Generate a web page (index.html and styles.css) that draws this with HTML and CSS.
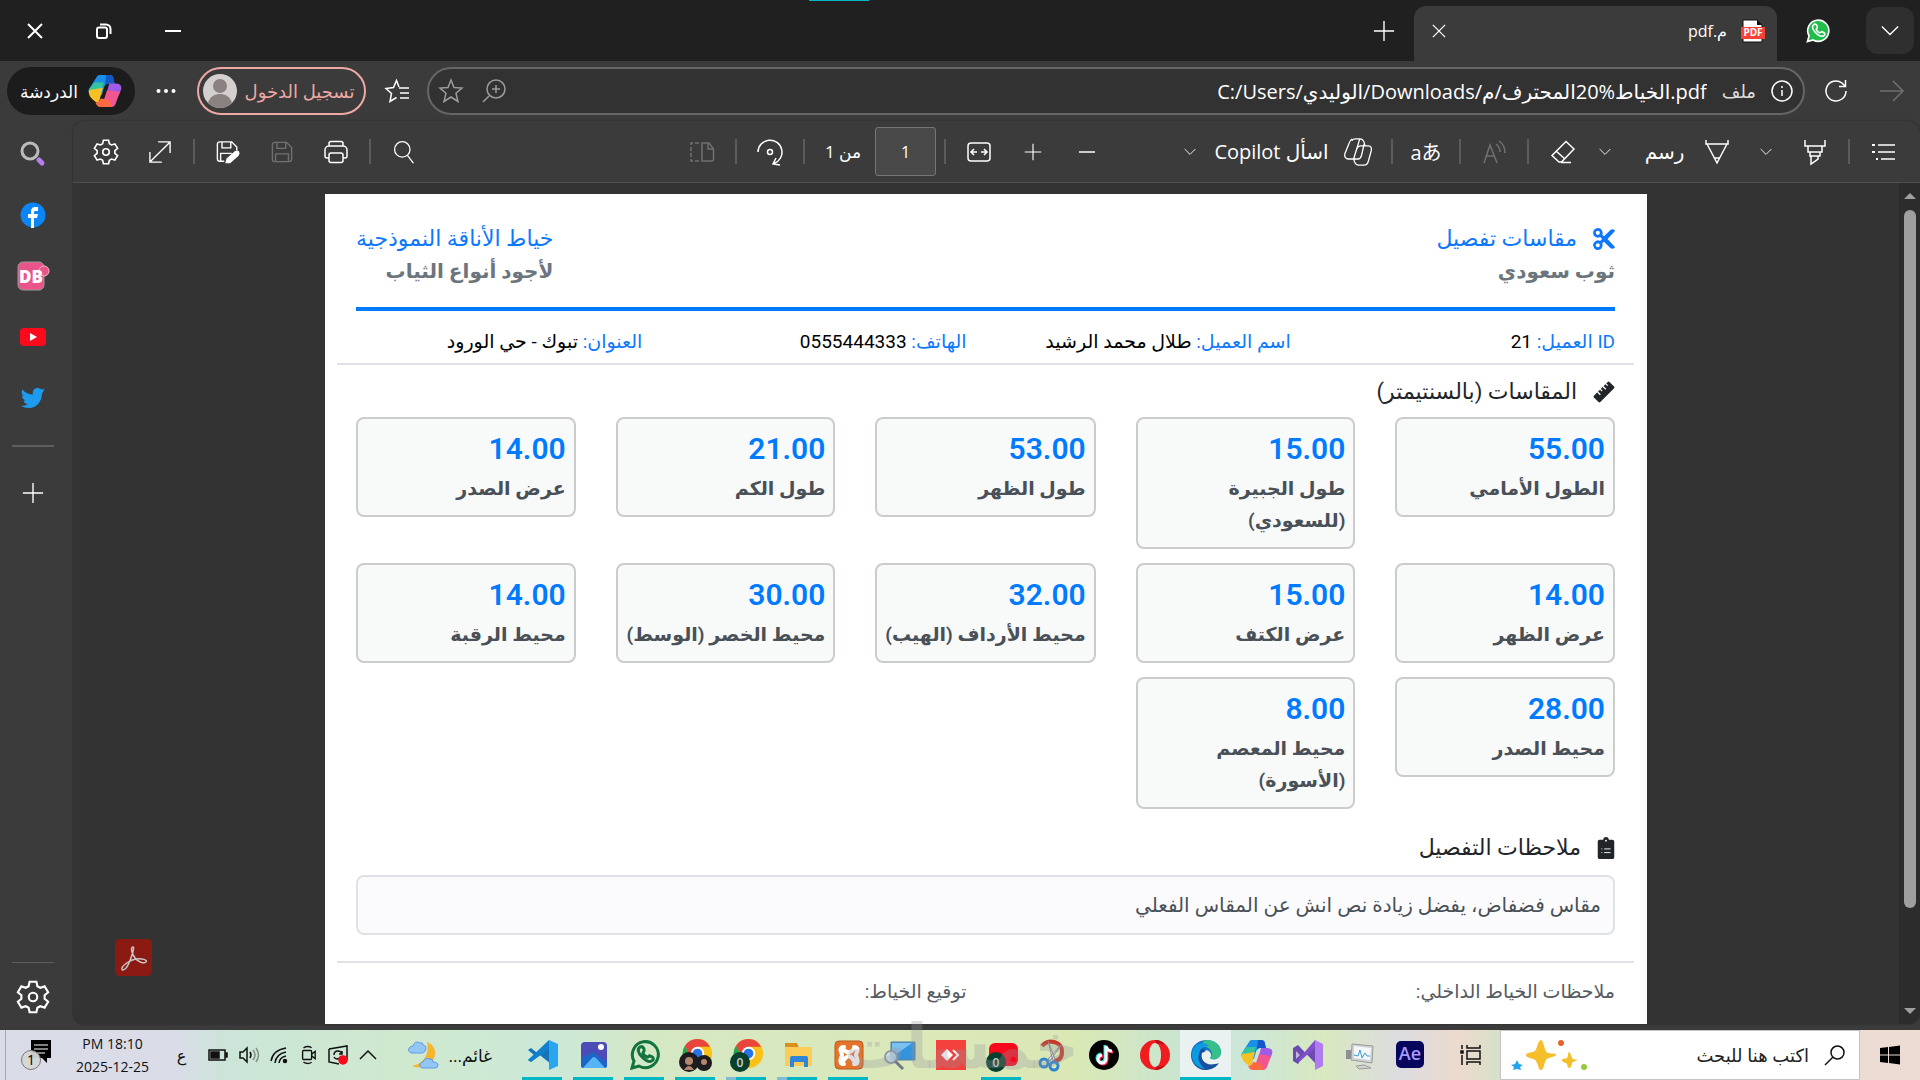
FILE: index.html
```html
<!DOCTYPE html>
<html lang="ar" dir="rtl">
<head>
    <meta charset="UTF-8">
    <meta name="viewport" content="width=device-width, initial-scale=1.0">
    <title>م.pdf</title>
    <link rel="stylesheet" href="styles.css">
</head>
<body>

<!-- shared icons -->
<svg class="sprite" aria-hidden="true">
    <symbol id="i-close" viewBox="0 0 16 16"><path d="M1 1l14 14M15 1L1 15"/></symbol>
    <symbol id="i-plus" viewBox="0 0 24 24"><path d="M12 1v22M1 12h22"/></symbol>
    <symbol id="i-down" viewBox="0 0 20 12"><path d="M1 1l9 9 9-9"/></symbol>
    <symbol id="i-search" viewBox="0 0 24 28"><circle cx="10" cy="11" r="9"/><path d="M16 18l7 9"/></symbol>
    <symbol id="i-gear" viewBox="0 0 24 24"><path d="M9.600 1.200h4.800l.7 3.200 2 1.100 3.100-1 2.500 4.200-2.500 2.100v2.400l2.500 2.100-2.500 4.200-3.100-1-2 1.100-.7 3.200H9.600l-.7-3.200-2-1.100-3.100 1-2.500-4.200 2.500-2.100v-2.400L1.300 8.700l2.500-4.200 3.100 1 2-1.100z"/><circle cx="12" cy="12" r="3"/></symbol>
    <symbol id="i-save" viewBox="0 0 24 24"><path d="M4 1.500h13l5.500 5.500v13a2.500 2.500 0 0 1-2.500 2.500H4A2.500 2.500 0 0 1 1.500 20V4A2.500 2.500 0 0 1 4 1.500zM6.500 1.500V8H16V1.500M5 22.500V14h14v8.500"/></symbol>
    <symbol id="i-copilot" viewBox="0 0 32 32">
        <path fill="#1a8fe8" d="M8 3c1-2 2-2 4-2h8c3 0 4 2 4 4l1 4h-5c-3 0-4 1-5 4l-2 7H6c-5 0-6-3-5-6z"/>
        <path fill="#32c5a0" d="M6 8h9l-4 12H6c-5 0-6-3-5-6z"/>
        <path fill="#f6c027" d="M1 15l13-2-3 11c-1 3-2 4-4 2C3 23 0 20 1 15z"/>
        <path fill="#1558c8" d="M17 1h3c3 0 4 2 4 4l1 4h-5c-2 0-3 0-4 2z"/>
        <path fill="#a05be6" d="M20 9h6c5 0 6 3 5 6l-2 5H17z"/>
        <path fill="#f0568f" d="M18 15l12 2-4 11c-1 2-2 3-4 3h-4l-4-4z"/>
        <path fill="#ff6a45" d="M7 27c2 0 4-1 5-4l7 1 4 6c-1 1-2 1-3 1h-8c-3 0-4-2-5-4z"/>
    </symbol>
    <symbol id="i-whatsapp" viewBox="0 0 32 32"><path d="M3 29l2-7A13 13 0 1 1 10 27z"/><path class="phone" d="M11 8c-3 2-2 6 2 10s8 6 11 3c1-2 0-3-3-4-1-1-2 2-3 1-2-1-4-3-4-4 0-2 2-1 1-4-1-2-2-3-4-2z"/></symbol>
    <symbol id="i-chrome" viewBox="0 0 32 32">
        <circle cx="16" cy="16" r="15" fill="#fbc116"/>
        <path fill="#e8453c" d="M3 8a15 15 0 0 1 26 1H16l-7 10z"/>
        <path fill="#2ba24c" d="M3 8l7 12 6 3-3 8A15 15 0 0 1 3 8z"/>
        <circle cx="16" cy="16" r="7" fill="#fff"/><circle cx="16" cy="16" r="5" fill="#2a74e8"/>
    </symbol>
</svg>

<div class="browser">
    <header class="titlebar">
        <button class="tab-menu" aria-label="قائمة علامات التبويب"><svg class="line w18"><use href="#i-down"/></svg></button>
        <button class="pinned-tab" aria-label="WhatsApp"><svg class="wa-tab"><use href="#i-whatsapp"/></svg></button>
        <div class="tab">
            <svg class="pdf-icon" viewBox="0 0 24 24"><path fill="#fff" stroke="#111" d="M2 1h14l5 5v17H2z"/><path fill="#111" d="M16 1l5 5h-5z"/><path fill="#f44336" d="M0 8h24v12H0z"/><text x="12" y="17" text-anchor="middle">PDF</text></svg>
            <span class="tab-title">م.pdf</span>
            <button aria-label="إغلاق علامة التبويب"><svg class="line w14"><use href="#i-close"/></svg></button>
        </div>
        <button class="new-tab" aria-label="علامة تبويب جديدة"><svg class="line w22"><use href="#i-plus"/></svg></button>
        <div class="window-buttons">
            <button aria-label="تصغير"><svg class="line thick w16" viewBox="0 0 16 16"><path d="M0 8h16"/></svg></button>
            <button aria-label="استعادة"><svg class="line thick w16" viewBox="0 0 16 16"><rect x="1" y="4.500" width="10" height="10.500" rx="2"/><path d="M4 1.500h6a4.500 4.500 0 0 1 4.500 4.500v5"/></svg></button>
            <button aria-label="إغلاق"><svg class="line thick w16"><use href="#i-close"/></svg></button>
        </div>
        <i class="top-mark"></i>
    </header>

    <div class="address-row">
        <button class="nav-btn dim" aria-label="الأمام"><svg class="line w24" viewBox="0 0 24 24"><path d="M0 12h23M13 2l10 10-10 10"/></svg></button>
        <button class="nav-btn" aria-label="تحديث"><svg class="line w24" viewBox="0 0 24 24"><path d="M22 12A10 10 0 1 1 18 4l3 3M21.500 1v6.500H15"/></svg></button>
        <div class="address">
            <svg class="line w22" viewBox="0 0 22 22"><circle cx="11" cy="11" r="10"/><path d="M11 10v6M11 6v2"/></svg>
            <label for="url">ملف</label>
            <input id="url" type="text" dir="ltr" value="C:/Users/الوليدي/Downloads/الخياط%20المحترف/م.pdf">
            <button class="soft" aria-label="تكبير"><svg class="line w24" viewBox="0 0 24 24"><circle cx="14" cy="10" r="9"/><path d="M7 17l-6 6M14 6v8M10 10h8"/></svg></button>
            <button class="soft" aria-label="إضافة إلى المفضلة"><svg class="line w24" viewBox="0 0 24 24"><path d="M12 1l3 7.500 8 .6-6 5.200 2 8.200-7-4.500-7 4.500 2-8.200-6-5.200 8-.6z"/></svg></button>
        </div>
        <button class="fav-btn" aria-label="المفضلة"><svg class="line w24" viewBox="0 0 24 24"><path d="M14 8L11.500 1.500 8.500 8.500 1 9.500l5.500 5-1.500 8 6.500-4M14 9h10M15 14h9M15 19h9"/></svg></button>
        <button class="signin">تسجيل الدخول
            <svg class="avatar" viewBox="0 0 34 34"><circle cx="17" cy="17" r="17" fill="#d3d0cf"/><circle cx="17" cy="12" r="7" fill="#8a8280"/><path fill="#8a8280" d="M5 29c2-7 7-9 12-9s10 2 12 9a17 17 0 0 1-24 0z"/></svg>
        </button>
        <button class="dots" aria-label="المزيد"><svg class="w20" viewBox="0 0 20 6"><circle cx="2.500" cy="3" r="2"/><circle cx="10" cy="3" r="2"/><circle cx="17.500" cy="3" r="2"/></svg></button>
        <button class="chat"><svg class="w34"><use href="#i-copilot"/></svg>الدردشة</button>
    </div>

    <div class="workspace">
        <main class="viewer">
            <div class="toolbar">
                <div class="group">
                    <button aria-label="جدول المحتويات"><svg class="line w24" viewBox="0 0 24 24"><path d="M7 5h17M7 12h17M10 19h14"/><path class="thick" d="M1 5h3M1 12h3M5 19h2"/></svg></button>
                    <i class="sep"></i>
                    <button aria-label="تمييز"><svg class="line w24" viewBox="0 0 24 24"><path d="M2 0v6h20V0M5 6v6h14V6M7 12v4h10v-4M8 16v8l7-5v-3"/></svg></button>
                    <button class="narrow" aria-label="خيارات التمييز"><svg class="line w12"><use href="#i-down"/></svg></button>
                    <button aria-label="قلم"><svg class="line w24" viewBox="0 0 24 24"><path d="M1 0v4h22V0M2 4l10 19L22 4M9.500 18h5"/></svg></button>
                    <button class="text draw">رسم</button>
                    <button class="narrow" aria-label="خيارات الرسم"><svg class="line w12"><use href="#i-down"/></svg></button>
                    <button class="eraser" aria-label="ممحاة"><svg class="line w24" viewBox="0 0 24 24"><path d="M15 1.500L23 9 10.500 22H8L1 15.500zM5 11l9 8M10 22.500h10"/></svg></button>
                    <i class="sep"></i>
                    <button class="dim" aria-label="القراءة بصوت عال"><svg class="line w24" viewBox="0 0 24 24"><path d="M2 23L8 5l7 18M4 16h9M14 4q4 3 4 8M17 1q6 4 6 12"/></svg></button>
                    <i class="sep"></i>
                    <button class="translate" aria-label="ترجمة">aあ</button>
                    <i class="sep"></i>
                    <button aria-label="Copilot"><svg class="line w28" viewBox="0 0 32 32"><path d="M9 3c1-2 2-2 4-2h5c3 0 4 1 5 4l1 4h4c3 0 4 3 3 6l-3 11c-1 4-3 5-5 5h-6c-3 0-4-1-5-4l-1-3H5c-3 0-5-3-4-6L5 8c1-3 2-5 4-7M24 9h-5c-3 0-4 2-5 5l-3 10h5c2 0 3-1 4-4l3-13M18 1l-7 23"/></svg></button>
                    <button class="text ask">اسأل Copilot</button>
                    <button class="narrow" aria-label="خيارات Copilot"><svg class="line w12"><use href="#i-down"/></svg></button>
                </div>
                <div class="group middle">
                    <button aria-label="تصغير العرض"><svg class="line w18" viewBox="0 0 18 18"><path d="M1 9h16"/></svg></button>
                    <button aria-label="تكبير العرض"><svg class="line w18" viewBox="0 0 24 24"><path d="M12 1v22M1 12h22"/></svg></button>
                    <button aria-label="ملاءمة العرض"><svg class="line w24" viewBox="0 0 24 24"><rect x="1" y="3" width="22" height="18" rx="3"/><path d="M10 12H4.500M7 9l-3 3 3 3M14 12h5.500M17 9l3 3-3 3"/></svg></button>
                    <i class="sep"></i>
                    <input class="page-input" type="text" value="1" aria-label="رقم الصفحة">
                    <span class="page-count">من 1</span>
                    <i class="sep"></i>
                    <button aria-label="تدوير"><svg class="line w28" viewBox="0 0 28 28"><path d="M2 14A12 12 0 1 1 18 25.500M24 27l-7-1 3-6"/><circle cx="14" cy="14" r="2.500"/></svg></button>
                    <i class="sep"></i>
                    <button class="dim" aria-label="عرض الصفحة"><svg class="line w24" viewBox="0 0 24 24"><path d="M12 3h7l4.500 6v10a2 2 0 0 1-2 2H12zM18 3v6h5"/><path stroke-dasharray="4 2" d="M9 3H1v18h8"/></svg></button>
                </div>
                <div class="group end">
                    <button aria-label="بحث"><svg class="line w24"><use href="#i-search"/></svg></button>
                    <i class="sep"></i>
                    <button aria-label="طباعة"><svg class="line w24" viewBox="0 0 24 24"><path d="M5 6V3.500A2 2 0 0 1 7 1.500h10a2 2 0 0 1 2 2V6M5 18H3a2 2 0 0 1-2-2v-6a4 4 0 0 1 4-4h14a4 4 0 0 1 4 4v6a2 2 0 0 1-2 2h-2"/><rect x="5" y="13" width="14" height="9.500" rx="2"/></svg></button>
                    <button class="dim" aria-label="حفظ"><svg class="line w22"><use href="#i-save"/></svg></button>
                    <button aria-label="حفظ باسم"><svg class="line w24" viewBox="0 0 26 25"><path d="M9 22.500H4A2.500 2.500 0 0 1 1.500 20V4A2.500 2.500 0 0 1 4 1.500h13L22.500 7v4M6.500 1.500V8H16V1.500M5 22.500V14h12"/><path fill="currentColor" d="M11 24l1-4 9-8c3-1 5 1 3 4l-9 8z"/></svg></button>
                    <i class="sep"></i>
                    <button aria-label="ملء الشاشة"><svg class="line w22" viewBox="0 0 24 24"><path d="M1 23L23 1M10 1h13v12M1 12v11h13"/></svg></button>
                    <button aria-label="إعدادات"><svg class="line w26"><use href="#i-gear"/></svg></button>
                </div>
            </div>

            <div class="canvas">
                <div class="scrollbar"><i class="arrow up"></i><i class="thumb"></i><i class="arrow down"></i></div>
                <div class="pages">
                    <article class="paper">
                        <header class="paper-head">
                            <div>
                                <h1><svg class="fa" viewBox="0 0 512 512"><path fill-rule="evenodd" d="M256 192l-40-35A112 112 0 1 0 165 211l46 45-46 45a112 112 0 1 0 51 54l40-35 135 136c33 33 77 31 113 4 8-6 8-16 1-23L339 256 505 75c7-7 7-17 1-23-36-27-80-29-113 4zM112 160a48 48 0 1 1 0-96 48 48 0 0 1 0 96zm0 288a48 48 0 1 1 0-96 48 48 0 0 1 0 96z"/></svg>مقاسات تفصيل</h1>
                                <p>ثوب سعودي</p>
                            </div>
                            <div>
                                <h1>خياط الأناقة النموذجية</h1>
                                <p>لأجود أنواع الثياب</p>
                            </div>
                        </header>

                        <div class="client">
                            <div><b>ID العميل:</b> 21</div>
                            <div><b>اسم العميل:</b> طلال محمد الرشيد</div>
                            <div><b>الهاتف:</b> 0555444333</div>
                            <div><b>العنوان:</b> تبوك - حي الورود</div>
                        </div>

                        <h2 class="sizes-title"><svg class="fa" viewBox="0 0 24 24"><path d="M1 16L16 1q1-1 2 0l5 5q1 1 0 2L8 23q-1 1-2 0l-5-5q-1-1 0-2z"/><path stroke="#fff" stroke-width="1.400" fill="none" d="M5 12l3 3M8 9l2 2M11 6l3 3M14 3l2 2"/></svg>المقاسات (بالسنتيمتر)</h2>
                        <div class="cards">
                            <div class="card"><strong>55.00</strong><span>الطول الأمامي</span></div>
                            <div class="card"><strong>15.00</strong><span>طول الجبيرة<br>(للسعودي)</span></div>
                            <div class="card"><strong>53.00</strong><span>طول الظهر</span></div>
                            <div class="card"><strong>21.00</strong><span>طول الكم</span></div>
                            <div class="card"><strong>14.00</strong><span>عرض الصدر</span></div>
                            <div class="card"><strong>14.00</strong><span>عرض الظهر</span></div>
                            <div class="card"><strong>15.00</strong><span>عرض الكتف</span></div>
                            <div class="card"><strong>32.00</strong><span>محيط الأرداف (الهيب)</span></div>
                            <div class="card"><strong>30.00</strong><span>محيط الخصر (الوسط)</span></div>
                            <div class="card"><strong>14.00</strong><span>محيط الرقبة</span></div>
                            <div class="card"><strong>28.00</strong><span>محيط الصدر</span></div>
                            <div class="card"><strong>8.00</strong><span>محيط المعصم<br>(الأسورة)</span></div>
                        </div>

                        <h2 class="notes-title"><svg class="fa slim" viewBox="0 0 18 24"><path d="M2 3h4q0-3 3-3t3 3h4q2 0 2 2v17q0 2-2 2H2q-2 0-2-2V5q0-2 2-2z"/><path stroke="#fff" fill="none" d="M4 13h1M7 13h7M4 17h1M7 17h7"/><circle cx="9" cy="4" r="1" fill="#fff"/></svg>ملاحظات التفصيل</h2>
                        <p class="notes">مقاس فضفاض، يفضل زيادة نص انش عن المقاس الفعلي</p>

                        <footer class="paper-foot">
                            <span>ملاحظات الخياط الداخلي:</span>
                            <span>توقيع الخياط:</span>
                        </footer>
                    </article>
                </div>
                <button class="acrobat" aria-label="Acrobat"><svg class="line w26" viewBox="0 0 26 26"><path d="M12 2c-3 0-1 7 2 11s9 6 11 4-4-4-10-3S2 20 1 23s3 3 6-3 7-18 5-18z"/></svg></button>
            </div>
        </main>

        <nav class="sidebar">
            <button aria-label="بحث"><svg class="w26" viewBox="0 0 26 26"><circle cx="10" cy="10" r="8" fill="none" stroke="#b9bbbc" stroke-width="3"/><path stroke="#b77fee" stroke-width="5" stroke-linecap="round" d="M19 19l3 3"/></svg></button>
            <button aria-label="Facebook"><svg class="w26" viewBox="0 0 26 26"><circle cx="13" cy="13" r="12.500" fill="#0b86f4"/><path fill="#fff" d="M11 26V16H8v-4h3v-2c0-4 2-5 4-5h3v4h-2c-1 0-2 0-2 2v1h4l-1 4h-3v10z"/></svg></button>
            <button aria-label="DB"><svg class="w32" viewBox="0 0 32 28"><rect x="1" width="26" height="28" rx="5" fill="#e9558b" stroke="#999"/><circle cx="27" cy="9" r="5" fill="#e9558b" stroke="#f6b7cc"/><text x="14" y="21" class="db" text-anchor="middle">DB</text></svg></button>
            <button aria-label="YouTube"><svg class="w26" viewBox="0 0 26 18"><rect width="26" height="18" rx="4" fill="#fb0a1c"/><path fill="#fff" d="M10 5l7 4-7 4z"/></svg></button>
            <button aria-label="Twitter"><svg class="w24" viewBox="0 0 24 20"><path fill="#1d9bf0" d="M23 2.500l-2 3C21 14 15 20 8 20c-3 0-6-1-8-2 3 0 5-1 7-2-2 0-4-1-4.500-3.500H5C2 12 1 9.500 1 7.500l2 .5C0 6 .500 3 1.500 1.500 4 5 8 6.500 12 6.500 11 2 14 0 17 0c1 0 3 1 3.500 1.500L23.500.5 22 3z"/></svg></button>
            <hr>
            <button aria-label="إضافة"><svg class="line w22"><use href="#i-plus"/></svg></button>
            <div class="sidebar-end">
                <hr>
                <button aria-label="إعدادات الشريط الجانبي"><svg class="line w34"><use href="#i-gear"/></svg></button>
            </div>
        </nav>
    </div>
</div>

<footer class="taskbar">
    <button class="start" aria-label="ابدأ"><svg class="w20" viewBox="0 0 20 20"><path d="M0 3l8-1v7.500H0zM9 2l11-1.500v9H9zM0 10.500h8V18l-8-1zM9 10.500h11v9L9 18z"/></svg></button>
    <div class="search">
        <svg class="line w20" viewBox="0 0 20 20"><circle cx="12.500" cy="7.500" r="6.500"/><path d="M8 12L0 20"/></svg>
        <input id="search" type="text" placeholder="اكتب هنا للبحث" aria-label="اكتب هنا للبحث">
        <svg class="sparkle" viewBox="0 0 76 30"><path fill="#f4bf2a" d="M30 0c3 0 3 12 7 13s9 0 8 2-8 2-10 5-2 10-5 10-3-8-6-10-9-2-9-5 7-2 9-4 3-11 6-11zM58 12c2 0 2 6 4 7s5 0 4 1-5 2-5 3-1 5-3 5-1-4-3-5-4-1-4-3 4-1 5-2 1-6 2-6z"/><path fill="#25a4ee" d="M6 20l2 4 4 1-3 2 1 3-4-1-4 1 1-3-3-2 4-1z"/><circle cx="50" cy="3" r="3" fill="#e8622c"/><circle cx="73" cy="27" r="3" fill="#9ac83c"/></svg>
    </div>
    <button class="task-view" aria-label="عرض المهام"><svg class="line w20" viewBox="0 0 20 20"><path d="M7 0v3h13V0M7 20v-3h13v3M7 6h13v8H7zM2 0v4M2 10v10"/><path fill="currentColor" d="M1 6h2v2H1z"/></svg></button>
    <div class="apps">
        <button aria-label="After Effects"><svg class="w30" viewBox="0 0 30 30"><rect x="1" y="1" width="28" height="27" rx="5" fill="#07055c"/><text class="ae" x="15" y="20" text-anchor="middle">Ae</text></svg></button>
        <button aria-label="Monitor"><svg class="w30" viewBox="0 0 30 30"><path fill="#cfd1d3" stroke="#9a9c9e" d="M8 4l21 2-1 17-21-3zM12 26l8-1 7 3-12 1z"/><path fill="#f4f8fb" d="M10 6l17 2-1 12-16-2z"/><path stroke="#3c9bd4" fill="none" d="M10 15l4 1 2-6 2 8 3-5 2 3h3"/><path fill="#8d9194" d="M2 10h5v9H2z"/></svg></button>
        <button aria-label="Visual Studio"><svg class="w32" viewBox="0 0 32 32"><path fill="#6c4ab0" d="M1 9l5-3 17 18V8L8 22l-2 3-5-3z"/><path fill="#fff" fill-opacity=".6" d="M4 12l4 4-4 4z"/><path fill="#b07cf0" d="M23 1l8 4v22l-8 4z"/><path fill="#8250cf" d="M23 1v8L8 22l-2-1z"/></svg></button>
        <button aria-label="Copilot"><svg class="w32"><use href="#i-copilot"/></svg></button>
        <button class="open active" aria-label="Edge"><svg class="w32" viewBox="0 0 32 32"><path fill="#1572c8" d="M1 16C1 5 10 1 17 1s14 5 14 12-8 9-11 6c3-3 0-8-5-8S1 14 1 16z"/><path fill="#35c08a" d="M17 1c8 0 14 5 14 12s-8 9-11 6c5-4 0-12-9-12 1-4 4-6 6-6z"/><path fill="#17509e" d="M12 14c-2 6 3 15 17 10-4 6-10 7-14 7C7 31 1 24 1 16c3-8 12-8 15-4z"/><path fill="#0c9be0" d="M2 14C4 4 14 1 19 7c-6 0-9 3-10 8-2 5 1 11 6 15C6 29 1 22 2 14z"/></svg></button>
        <button aria-label="Opera"><svg class="w32" viewBox="0 0 32 32"><path fill="#f01c20" fill-rule="evenodd" d="M16 1a15 15 0 1 1 0 30 15 15 0 0 1 0-30zm0 3c-4 0-6 6-6 12s2 12 6 12 6-6 6-12-2-12-6-12z"/><path fill="#b50d12" d="M16 1c5 0 8 2 10 5-2-1-5-3-8-1zM16 31c5 0 8-2 10-5-2 1-5 3-8 1z"/></svg></button>
        <button aria-label="TikTok"><svg class="w32" viewBox="0 0 32 32"><circle cx="16" cy="16" r="15"/><g fill="none" stroke-width="3"><path stroke="#28e6e0" d="M17 6v13a4 4 0 1 1-4-4M17 7q1 5 6 5"/><path stroke="#fb3058" d="M19 8v13a4 4 0 1 1-4-4M19 8q1 5 6 5"/><path stroke="#fff" d="M18 7v13a4 4 0 1 1-4-4M18 7q1 5 6 5"/></g></svg></button>
        <button aria-label="Snipping Tool"><svg class="w32" viewBox="0 0 32 32"><path fill="none" stroke="#c93826" stroke-width="4" d="M5 7c7-8 21-4 20 6 0 7-4 9-9 9"/><path fill="#e4e4e4" stroke="#8d8d8d" d="M11 2l7 18-2 2zM24 6L13 22l-2-2z"/><g fill="none" stroke="#2a85cf" stroke-width="3"><circle cx="7" cy="24" r="4"/><circle cx="17" cy="27" r="4"/></g></svg></button>
        <button class="open" aria-label="YouTube"><svg class="w32" viewBox="0 0 32 32"><rect x="3" y="4" width="29" height="23" rx="6" fill="#f7091c"/><circle cx="10" cy="23" r="10" fill="#07402d"/><text class="badge-num" x="10" y="28" text-anchor="middle">0</text></svg></button>
        <button aria-label="AnyDesk"><svg class="w30" viewBox="0 0 30 30"><path fill="#f4413b" d="M0 0h30v30H0z"/><path fill="#fff" d="M11 9l6 6-6 6-6-6z"/><path fill="none" stroke="#fff" stroke-width="2" d="M17 10l5 5-5 5"/></svg></button>
        <button aria-label="Magnifier"><svg class="w30" viewBox="0 0 30 30"><path fill="#3394dd" stroke="#5a7c96" d="M6 2h24v18H6z"/><path fill="#7ac2f2" d="M7 3h20L7 17z"/><circle cx="6" cy="17" r="6" fill="#cfe5f5" fill-opacity=".8" stroke="#8e9aa5" stroke-width="2"/><path stroke="#707880" stroke-width="3" d="M10 21l8 8"/></svg></button>
        <button class="open" aria-label="XAMPP"><svg class="w30" viewBox="0 0 30 30"><rect x="1" y="1" width="28" height="28" rx="4" fill="#e5742a" stroke="#b55a20"/><path fill="none" stroke="#fff" stroke-width="4" stroke-linecap="round" d="M10 7q-5 0-3 5 2 3 0 6-2 6 3 6M20 7q5 0 3 5-2 3 0 6 2 6-3 6M10 10q5 5 10-1M10 20q5-8 10 1"/></svg></button>
        <button class="open double" aria-label="Explorer"><svg class="w30" viewBox="0 0 30 30"><path fill="#d9901a" d="M2 3h12l2 5H2z"/><path fill="#fbcd58" d="M2 7h27v19H2z"/><path fill="#2f86d8" d="M7 27v-9q0-2 2-2h14q2 0 2 2v9h-4v-5H11v5z"/></svg></button>
        <button class="open double" aria-label="Chrome"><svg class="w34" viewBox="0 0 34 34"><use href="#i-chrome" x="3" width="31" height="31"/><circle cx="10" cy="24" r="10" fill="#07402d"/><text class="badge-num" x="10" y="29" text-anchor="middle">0</text></svg></button>
        <button class="open" aria-label="Chrome"><svg class="w34" viewBox="0 0 34 34"><use href="#i-chrome" x="3" width="31" height="31"/><circle cx="10" cy="24" r="10" fill="#1d1d20"/><circle cx="25" cy="25" r="8" fill="#1d1d20"/><circle cx="10" cy="23" r="4" fill="#b5866f"/><path fill="#b5866f" d="M5 32q5-8 10 0z"/><circle cx="25" cy="24" r="3" fill="#b5866f"/></svg></button>
        <button class="open" aria-label="WhatsApp"><svg class="wa-task w32"><use href="#i-whatsapp"/></svg></button>
        <button class="open" aria-label="Photos"><svg class="w30" viewBox="0 0 30 30"><rect x="2" y="2" width="26" height="26" rx="4" fill="#4c4bb8"/><path fill="#1c66c8" d="M2 18L14 12l14 10v4q0 2-2 2H4q-2 0-2-2z"/><path fill="#56b4f6" d="M4 28l9-10q2-2 4 0l9 10z"/><circle cx="22" cy="7" r="3" fill="#fff"/></svg></button>
        <button class="open" aria-label="Visual Studio Code"><svg class="w32" viewBox="0 0 32 32"><path fill="#1573b8" d="M1 11l3-2 20 16V7L4 23l-3-2 6-5z"/><path fill="#2aa5ee" d="M22 1l9 4v22l-9 4z"/><path fill="#0f80cc" d="M22 1v9L4 23l-3-2z"/></svg></button>
    </div>
    <div class="weather">غائم...
        <svg class="w32" viewBox="0 0 32 30"><path fill="#f5b52e" d="M20 2c7 3 10 9 7 16S13 30 5 26c10-2 18-10 15-24z"/><path fill="#93c5f5" stroke="#5c9ce5" d="M4 13q-4-2-2-5 1-2 4-2 2-6 7-3 3-1 3 2 5 1 2 6-1 2-3 2zM15 28q-3-1-2-4 1-2 3-2 2-5 7-3 3 0 3 3 5 0 5 3 0 3-3 3z"/></svg>
    </div>
    <div class="tray">
        <svg class="line w18" viewBox="0 0 18 10"><path d="M1 9l8-8 8 8"/></svg>
        <svg class="line w20" viewBox="0 0 20 20"><path d="M1 4l18-3v14M1 4v13l10 2M6 10q0-4 4-4 3 0 4 3M14 6v3h-3M13 11q-1 3-4 3-2 0-3-2"/><circle cx="15" cy="15" r="4" fill="#fb0a1c" stroke="#fb0a1c"/></svg>
        <svg class="line w18" viewBox="0 0 18 20"><rect x="3" y="5" width="10" height="10" rx="1"/><path d="M13 9l4-3v8l-4-3M4 2q5-3 9 0M4 18q5 3 9 0"/></svg>
        <svg class="line w18" viewBox="0 0 18 18"><path d="M1 15Q3 4 16 2M5 17Q6 8 16 6M9 17q1-6 7-7"/><circle cx="15" cy="15" r="1.500" fill="currentColor"/></svg>
        <svg class="line w20" viewBox="0 0 20 16"><path d="M1 5h3l4-4v14l-4-4H1zM11 5q2 3 0 6"/><path opacity=".4" d="M14 3q4 5 0 10M17 1q5 7 0 14"/></svg>
        <svg class="line w20" viewBox="0 0 20 12"><path d="M1 1h16v10H1z"/><path fill="currentColor" d="M3 3h8v6H3zM18 4h1v4h-1z"/></svg>
        <span class="lang">ع</span>
    </div>
    <div class="clock" dir="ltr"><span>PM 18:10</span><span>2025-12-25</span></div>
    <button class="notify" aria-label="الإشعارات"><svg class="w30" viewBox="0 0 30 30"><path d="M10 0h20v18h-4v5l-5-5H10z"/><path stroke="#fff" d="M13 5h14M13 9h14M16 13h8"/><circle cx="10" cy="20" r="9.500" fill="#d6d6d8" fill-opacity=".95" stroke="#777"/><text x="10" y="25" text-anchor="middle">1</text></svg></button>
</footer>

<div class="watermark" aria-hidden="true">خمسات</div>

</body>
</html>
```
FILE: styles.css
```css
* {
    box-sizing: border-box;
}

body {
    margin: 0;
    height: 100vh;
    display: flex;
    flex-direction: column;
    overflow: hidden;
    position: relative;
    background: #3b3b3b;
    color: #fff;
    font-family: "Open Sans", "DejaVu Sans", sans-serif;
    font-size: 16px;
}

button, input {
    font: inherit;
    color: inherit;
    background: none;
    border: 0;
    padding: 0;
    outline: none;
}

button {
    display: flex;
    align-items: center;
    justify-content: center;
    white-space: nowrap;
}

svg {
    display: block;
    flex: none;
    overflow: visible;
}

.sprite {
    position: absolute;
    width: 0;
    height: 0;
}

.line {
    fill: none;
    stroke: currentColor;
    stroke-width: 1.5;
}

.thick {
    stroke-width: 2;
}

.w12 { width: 12px; height: 8px; }
.w14 { width: 14px; height: 14px; }
.w16 { width: 16px; height: 16px; }
.w18 { width: 18px; height: 18px; }
.w20 { width: 20px; height: 20px; }
.w22 { width: 22px; height: 22px; }
.w24 { width: 24px; height: 24px; }
.w26 { width: 26px; height: 26px; }
.w28 { width: 28px; height: 28px; }
.w30 { width: 30px; height: 30px; }
.w32 { width: 32px; height: 32px; }
.w34 { width: 34px; height: 34px; }

.dim {
    color: #707070;
}

.soft {
    color: #9c9c9c;
}

/* browser window */
.browser {
    flex: 1;
    min-height: 0;
    display: flex;
    flex-direction: column;
}

.titlebar {
    height: 61px;
    background: #202020;
    display: flex;
    align-items: center;
    padding: 0 6px 0 0;
    position: relative;
}

.top-mark {
    position: absolute;
    top: 0;
    right: 1051px;
    width: 60px;
    height: 1px;
    background: #00b7c3;
}

.tab-menu {
    width: 48px;
    height: 47px;
    border-radius: 12px;
    background: #2f2f2f;
}

.pinned-tab {
    width: 89px;
    height: 48px;
    padding-right: 8px;
}

.wa-tab {
    width: 26px;
    height: 26px;
    fill: #20bd4c;
    stroke: #fff;
    stroke-width: 2;
}

.wa-tab .phone {
    fill: #fff;
}

.tab {
    width: 363px;
    height: 55px;
    align-self: flex-end;
    display: flex;
    align-items: center;
    gap: 14px;
    padding: 0 12px 6px 18px;
    border-radius: 12px 12px 0 0;
    background: #3b3b3b;
}

.tab-title {
    flex: 1;
}

.pdf-icon {
    width: 24px;
    height: 24px;
}

.pdf-icon text {
    font: bold 10px "Open Sans", sans-serif;
    fill: #fff;
}

.new-tab {
    width: 60px;
    height: 48px;
}

.window-buttons {
    display: flex;
    margin-right: auto;
}

.window-buttons button {
    width: 69px;
    height: 60px;
}

.address-row {
    height: 60px;
    display: flex;
    align-items: center;
    padding: 0 0 0 7px;
}

.nav-btn {
    width: 56px;
    height: 48px;
}

.address {
    flex: 1;
    height: 48px;
    margin-right: 3px;
    display: flex;
    align-items: center;
    gap: 15px;
    padding: 0 10px 0 8px;
    border: 2px solid #666;
    border-radius: 24px;
    background: #323232;
}

.address label {
    font-size: 18px;
    color: #ddd;
}

.address input {
    flex: 1;
    min-width: 0;
    text-align: right;
    font-size: 20px;
}

.address button {
    width: 28px;
}

.fav-btn {
    width: 61px;
    height: 48px;
}

.signin {
    width: 169px;
    height: 48px;
    padding-right: 6px;
    gap: 8px;
    border: 2px solid #eea9a4;
    border-radius: 24px;
    color: #eea9a4;
    font-size: 18px;
}

.avatar {
    width: 34px;
    height: 34px;
}

.dots {
    width: 62px;
    height: 48px;
    fill: #fff;
}

.chat {
    width: 128px;
    height: 48px;
    gap: 10px;
    border-radius: 24px;
    background: #1c1c1c;
    font-size: 17px;
}

.workspace {
    flex: 1;
    min-height: 0;
    display: flex;
}

.sidebar {
    width: 73px;
    display: flex;
    flex-direction: column;
    align-items: center;
    padding: 3px 7px 0 0;
}

.sidebar button {
    width: 60px;
    height: 60px;
    margin-bottom: 1px;
}

.sidebar hr {
    width: 42px;
    height: 2px;
    margin: 16px 0;
    border: 0;
    background: #5c5f61;
}

.sidebar-end {
    margin-top: auto;
    display: flex;
    flex-direction: column;
    align-items: center;
}

.sidebar-end hr {
    height: 1px;
    margin: 0 0 4px;
}

.sidebar-end button {
    margin-bottom: 3px;
}

.db {
    font: 900 17px "Open Sans", sans-serif;
    fill: #fff;
}

/* pdf viewer */
.viewer {
    flex: 1;
    min-width: 0;
    display: flex;
    flex-direction: column;
    margin-bottom: 6px;
    border-radius: 12px;
    overflow: hidden;
    background: #333;
    box-shadow: 0 0 2px #222;
}

.toolbar {
    height: 62px;
    display: flex;
    align-items: center;
    padding: 0 10px 0 6px;
    background: #3b3b3b;
    border-bottom: 1px solid #505050;
}

.group {
    display: flex;
    align-items: center;
}

.group button {
    width: 54px;
    height: 48px;
}

.group .narrow {
    width: 44px;
}

.group .eraser {
    width: 48px;
    padding-left: 8px;
}

.group .text {
    font-size: 20px;
}

.group .draw {
    width: 63px;
    padding-left: 12px;
}

.group .ask {
    width: 119px;
}

.group .translate {
    font: 20px "Open Sans", "Noto Sans CJK JP", sans-serif;
}

.middle {
    margin-right: 54px;
}

.end {
    margin-right: auto;
}

.sep {
    width: 2px;
    height: 25px;
    margin: 0 6px;
    background: #5c5c5c;
}

.page-input {
    width: 61px;
    height: 49px;
    margin-right: 2px;
    border: 1px solid #757575;
    border-radius: 3px;
    background: #494949;
    text-align: center;
}

.page-count {
    width: 64px;
    text-align: center;
    font-size: 17px;
}

.canvas {
    flex: 1;
    min-height: 0;
    display: flex;
    position: relative;
}

.scrollbar {
    width: 21px;
    background: #2c2c2c;
    display: flex;
    flex-direction: column;
    align-items: center;
    padding: 10px 0;
}

.arrow {
    border: 6px solid transparent;
}

.up {
    border-top: 0;
    border-bottom-color: #9f9f9f;
}

.down {
    border-bottom: 0;
    border-top-color: #9f9f9f;
}

.thumb {
    width: 12px;
    height: 85%;
    margin: 11px 0 auto;
    border-radius: 6px;
    background: #9f9f9f;
}

.pages {
    flex: 1;
    padding-top: 11px;
    overflow: hidden;
}

.acrobat {
    position: absolute;
    left: 42px;
    bottom: 48px;
    width: 37px;
    height: 37px;
    border-radius: 5px;
    background: #8b1a13;
    color: #c9c4c4;
}

/* printed sheet */
.paper {
    width: 72.4%;
    min-height: 100%;
    margin: 0 auto;
    padding: 29px 32px 0 31px;
    background: #fff;
    color: #000;
    font-family: Roboto, "DejaVu Sans", sans-serif;
    font-size: 19px;
    line-height: 32px;
}

.paper h1, .paper h2, .paper p {
    margin: 0;
}

.paper h1, .paper h2 {
    display: flex;
    align-items: center;
    gap: 16px;
    font-size: 22px;
    font-weight: normal;
}

.paper h1 {
    color: #0d78fd;
}

.paper h2 {
    color: #212529;
}

.fa {
    width: 22px;
    height: 22px;
    fill: currentColor;
}

.slim {
    width: 18px;
}

.paper-head {
    display: flex;
    justify-content: space-between;
    padding-bottom: 20px;
    border-bottom: 4px solid #007bff;
}

.paper-head p {
    font-size: 20px;
    font-weight: bold;
    color: #6c757d;
}

.client {
    display: grid;
    grid-template-columns: repeat(4, 1fr);
    margin: 0 -19px;
    padding: 15px 0 5px;
    border-bottom: 2px solid #dee2e6;
}

.client div {
    padding: 0 19px;
    white-space: nowrap;
}

.client b {
    font-weight: normal;
    color: #0d78fd;
}

.sizes-title {
    padding: 11px 0 9px;
}

.cards {
    display: grid;
    grid-template-columns: repeat(5, 1fr);
    gap: 14px 40px;
    align-items: start;
}

.card {
    display: flex;
    flex-direction: column;
    gap: 4px;
    padding: 10px 8px;
    border: 2px solid #ccc;
    border-radius: 8px;
    background: #f8f9f9;
    font-weight: bold;
    color: #495057;
    white-space: nowrap;
}

.card strong {
    font-size: 30px;
    font-weight: 600;
    line-height: 40px;
    color: #007bff;
}

.notes-title {
    padding: 23px 0 11px;
}

.paper .notes {
    padding: 12px;
    border: 2px solid #dee2e6;
    border-radius: 8px;
    background: #fbfbfd;
    color: #495057;
    font-size: 20px;
}

.paper-foot {
    display: grid;
    grid-template-columns: 1fr 1fr;
    margin: 26px -19px 0;
    padding-top: 13px;
    border-top: 2px solid #dee2e6;
    color: #555b61;
}

.paper-foot span {
    padding: 0 19px;
}

/* taskbar */
.taskbar {
    height: 50px;
    display: flex;
    align-items: center;
    color: #111;
    background: linear-gradient(90deg, #dadce8 0, #dadce8 9%, #cbe5d8 12%, #cfe9cf 21%, #cce8d8 29%, #d5e8c5 34%, #dbe8b8 48%, #d9e8b5 56%, #c8e5d3 62%, #cce6d8 65%, #d8e8c0 69%, #dcdce0 73%, #ecdace 76%, #d8e0c8 78%, #ecdcd3 97%);
}

.start {
    width: 60px;
    height: 50px;
}

.search {
    width: 360px;
    height: 50px;
    display: flex;
    align-items: center;
    gap: 16px;
    padding: 0 14px 0 10px;
    border: 1px solid #c4c4c8;
    background: #fff;
}

.search input {
    flex: 1;
    min-width: 0;
    font-size: 18px;
}

.search input::placeholder {
    color: #222;
    opacity: 1;
}

.sparkle {
    width: 76px;
    height: 30px;
}

.task-view {
    width: 60px;
    height: 50px;
}

.apps {
    display: flex;
    margin-right: 5px;
}

.apps button {
    width: 51px;
    height: 50px;
    position: relative;
}

.apps .active {
    background: #eaf1f1;
}

.open::after {
    content: "";
    position: absolute;
    bottom: 0;
    left: 5px;
    right: 6px;
    height: 3px;
    background: #00b7c3;
}

.active::after {
    left: 0;
    right: 0;
}

.double::after {
    background: linear-gradient(90deg, #7fbcd8 10px, #00b7c3 10px);
}

.ae {
    font: 600 18px "Open Sans", sans-serif;
    fill: #a79bff;
}

.badge-num {
    font: 600 12px "Open Sans", sans-serif;
    fill: #cfd6d3;
}

.wa-task {
    fill: none;
    stroke: #12733f;
    stroke-width: 3;
}

.wa-task .phone {
    fill: #12733f;
    stroke: none;
}

.weather {
    display: flex;
    align-items: center;
    gap: 9px;
    margin-right: 25px;
    font-size: 17px;
}

.tray {
    display: flex;
    align-items: center;
    gap: 11px;
    margin-right: 30px;
}

.lang {
    width: 32px;
    text-align: center;
}

.clock {
    width: 90px;
    margin-right: 8px;
    display: flex;
    flex-direction: column;
    align-items: center;
    font-size: 14px;
    line-height: 23px;
}

.notify {
    height: 50px;
    margin-right: auto;
    margin-left: 5px;
    padding-left: 15px;
    border-left: 1px solid #aaa;
}

.notify text {
    font: 14px "Open Sans", sans-serif;
}

.watermark {
    position: absolute;
    left: 844px;
    bottom: 8px;
    font: bold 62px/50px "DejaVu Sans", sans-serif;
    color: rgba(150, 150, 160, 0.3);
    pointer-events: none;
}
```
